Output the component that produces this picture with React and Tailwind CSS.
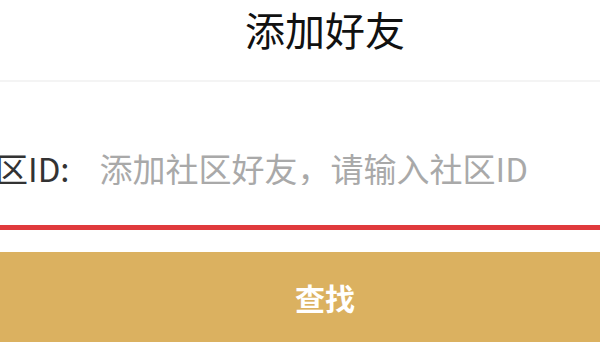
import React from 'react';

const font = { fontFamily: '"Noto Sans CJK SC", "Noto Sans", sans-serif' };

export default function App() {
  return (
    <div className="w-[600px] h-[350px] overflow-hidden bg-white" style={font}>
      {/* page is wider than the visible crop, centred at x=325 */}
      <div className="w-[750px] -ml-[50px]">
        <div className="h-[82px] border-b-2 border-[#f4f4f4] pt-[9px]">
          <h1 className="text-center text-[40px] leading-[40px] font-normal text-[#111]">
            添加好友
          </h1>
        </div>

        <div className="h-[142px] flex items-center pl-[12px] pt-[30px]">
          <span className="h-[34px] text-[33px] leading-[34px] text-[#333] whitespace-nowrap">
            社区ID:
          </span>
          <input
            className="ml-[30px] h-[34px] p-0 flex-1 bg-transparent outline-none text-[33px] leading-[34px] text-[#333] placeholder:text-[#a9a9a9]"
            style={font}
            placeholder="添加社区好友，请输入社区ID"
          />
        </div>

        <div className="mt-[1px] h-[5px] bg-[#e03a3c]" />

        <button
          className="mt-[22px] w-full h-[90px] bg-[#dbb160] text-white text-[30px] font-bold flex items-center justify-center"
          style={font}
        >
          查找
        </button>
      </div>
    </div>
  );
}
